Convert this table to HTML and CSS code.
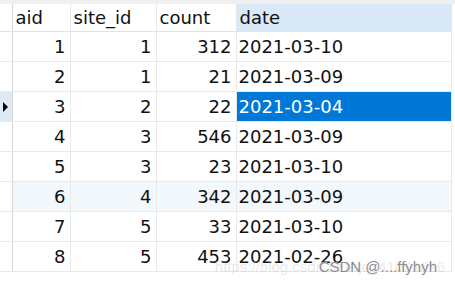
FILE: index.html
```html
<!DOCTYPE html>
<html lang="en">
<head>
    <meta charset="UTF-8">
    <title>site_access</title>
    <link rel="stylesheet" href="styles.css">
</head>
<body>
    <div class="toolbar"></div>
    <table class="grid">
        <colgroup>
            <col class="c-mark">
            <col class="c-aid">
            <col class="c-site">
            <col class="c-count">
            <col class="c-date">
        </colgroup>
        <thead>
            <tr>
                <th></th>
                <th>aid</th>
                <th>site_id</th>
                <th>count</th>
                <th class="sorted">date</th>
            </tr>
        </thead>
        <tbody>
            <tr><td class="mark"></td><td>1</td><td>1</td><td>312</td><td class="txt">2021-03-10</td></tr>
            <tr><td class="mark"></td><td>2</td><td>1</td><td>21</td><td class="txt">2021-03-09</td></tr>
            <tr class="current"><td class="mark"><span class="arrow"></span></td><td>3</td><td>2</td><td>22</td><td class="txt selected">2021-03-04</td></tr>
            <tr><td class="mark"></td><td>4</td><td>3</td><td>546</td><td class="txt">2021-03-09</td></tr>
            <tr><td class="mark"></td><td>5</td><td>3</td><td>23</td><td class="txt">2021-03-10</td></tr>
            <tr class="hover"><td class="mark"></td><td>6</td><td>4</td><td>342</td><td class="txt">2021-03-09</td></tr>
            <tr><td class="mark"></td><td>7</td><td>5</td><td>33</td><td class="txt">2021-03-10</td></tr>
            <tr><td class="mark"></td><td>8</td><td>5</td><td>453</td><td class="txt">2021-02-26</td></tr>
        </tbody>
    </table>

    <!-- image host watermark -->
    <div class="watermark">
        <span class="wm-url">https://blog.csdn.net/qq_41091626</span>
        <span class="wm-name">CSDN @....ffyhyh</span>
    </div>
</body>
</html>
```

FILE: styles.css
```css
body {
    margin: 0;
    background: #fff;
    font-family: "DejaVu Sans", "Noto Sans", sans-serif;
    color: #111;
    position: relative;
    width: 455px;
    height: 284px;
    overflow: hidden;
}

.toolbar {
    height: 4px;
    background: #f0f0f0;
}

.grid {
    border-collapse: collapse;
    table-layout: fixed;
    width: 451px;
    font-size: 18px;
}

.c-mark { width: 12px; }
.c-aid { width: 58px; }
.c-site { width: 86px; }
.c-count { width: 80px; }
.c-date { width: 215px; }

.grid th,
.grid td {
    border: 1px solid #e9e9e9;
    border-top: none;
    padding: 0;
    white-space: nowrap;
    overflow: hidden;
}

.grid th {
    height: 27px;
    font-weight: normal;
    text-align: left;
    padding-left: 3px;
    line-height: 26px;
    border-bottom-color: #e3e3e3;
}

.grid th:first-child {
    padding: 0;
}

.grid th.sorted {
    background: #d9e9f7;
}

.grid td {
    height: 29px;
    line-height: 28px;
    text-align: right;
    padding-right: 4px;
}

.grid td.txt {
    text-align: left;
    padding: 0 0 0 2px;
}

.grid th:first-child,
.grid td.mark {
    border-left: none;
    border-right-color: #d6d6d6;
    padding: 0;
}

.grid tr.hover td {
    background: #f3f8fd;
}

.grid tr.hover td.mark {
    background: #fff;
}

.grid tr.current td.mark {
    background: #dde9f5;
}

.arrow {
    display: block;
    width: 0;
    height: 0;
    margin: 0 0 0 3px;
    border-top: 5px solid transparent;
    border-bottom: 5px solid transparent;
    border-left: 5px solid #000;
}

.grid td.selected {
    background: #0078d7;
    color: #fff;
}

.watermark {
    position: absolute;
    right: 10px;
    bottom: 9px;
    height: 20px;
    width: 260px;
    font-family: "Liberation Sans", sans-serif;
}

.wm-url {
    position: absolute;
    right: 0;
    bottom: 0;
    font-size: 15px;
    color: rgba(200, 200, 200, 0.4);
}

.wm-name {
    position: absolute;
    right: 8px;
    bottom: 0;
    font-size: 15px;
    color: #8c8c8c;
    text-shadow: 0 0 1px #fff;
}
```
